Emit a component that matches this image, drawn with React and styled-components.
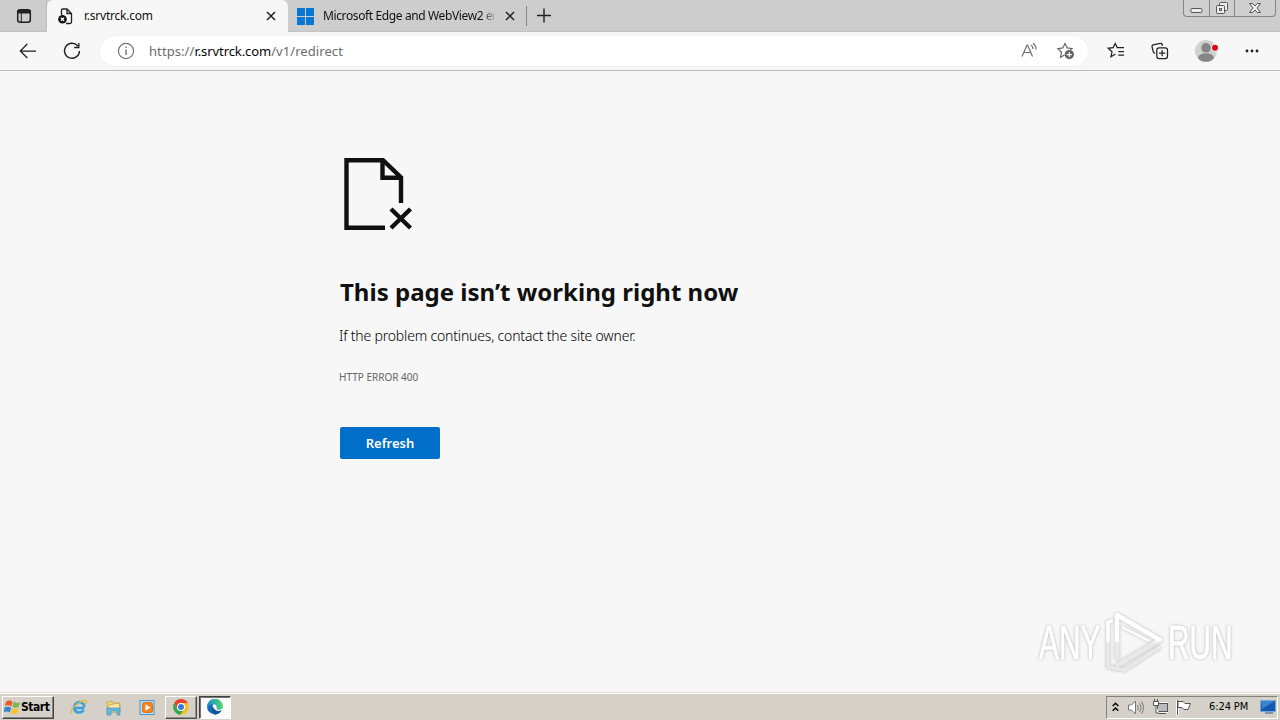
import React from "react";
import styled, { createGlobalStyle } from "styled-components";

const Global = createGlobalStyle`
  * { box-sizing: border-box; }
  html, body { margin: 0; padding: 0; overflow: hidden; }
  body { font-family: "Noto Sans", "Open Sans", sans-serif; }
  svg { display: block; flex: none; }
`;

const Screen = styled.div`
  position: relative;
  width: 1280px;
  height: 720px;
  display: flex;
  flex-direction: column;
  background: #f7f7f7;
  overflow: hidden;
`;

const TabStrip = styled.header`
  height: 32px;
  flex: none;
  display: flex;
  background: #cdcdcd;
  border-bottom: 1px solid #c2c2c2;
`;

const TabActions = styled.div`
  width: 47px;
  padding: 8px 0 0 16px;
  border-radius: 0 0 5px 0;
  border-right: 1px solid #bdbdbd;
`;

const Tab = styled.div`
  display: flex;
  align-items: center;
  width: ${(p) => (p.$active ? 241 : 238)}px;
  height: 32px;
  padding: 0 ${(p) => (p.$active ? "12px 0 10px" : "11px 0 9px")};
  background: ${(p) => (p.$active ? "#f7f7f7" : "transparent")};
  border-radius: 6px 6px 0 0;
  flex: none;
`;

const TabTitle = styled.span`
  flex: 1;
  min-width: 0;
  margin: 0 11px 0 ${(p) => (p.$fade ? 9 : 10)}px;
  font-size: 12px;
  line-height: 20px;
  letter-spacing: ${(p) => p.$spacing}px;
  white-space: nowrap;
  color: #111;
  ${(p) => p.$fade && "mask-image: linear-gradient(90deg, #000 158px, transparent 175px);"}
`;

const TabDivider = styled.div`
  width: 1px;
  height: 20px;
  margin: 6px 10px 0 0;
  background: #888;
`;

const WindowControls = styled.div`
  display: flex;
  height: 17px;
  margin: 0 4px 0 auto;
  border: 1px solid #858585;
  border-top: 0;
  border-radius: 0 0 4px 4px;
  background: #cfcfcf;
`;

const WindowButton = styled.div`
  width: ${(p) => p.$w}px;
  display: flex;
  justify-content: center;
  padding-top: 1px;
  & + & { border-left: 1px solid #858585; }
`;

const Toolbar = styled.nav`
  height: 39px;
  flex: none;
  display: flex;
  align-items: center;
  background: #f7f7f7;
  border-bottom: 1px solid #bcbcbc;
  padding: 0 18px;
`;

const NavButtons = styled.div`
  display: flex;
  gap: 24px;
  width: 82px;
`;

const AddressBar = styled.div`
  width: 988px;
  height: 30px;
  display: flex;
  align-items: center;
  padding: 0 12px 0 16px;
  border-radius: 15px;
  background: #fff;
  box-shadow: 0 0 2px #e8e8e8;
`;

const Url = styled.span`
  flex: 1;
  margin-left: 13px;
  font-size: 13px;
  line-height: 20px;
  letter-spacing: 0.08px;
  color: #6c6c6c;
  b { font-weight: 400; color: #050505; letter-spacing: -0.08px; }
`;

const AddressActions = styled.div`
  display: flex;
  gap: 16px;
`;

const ToolbarActions = styled.div`
  display: flex;
  align-items: center;
  gap: 24px;
  margin-left: 18px;
`;

const Page = styled.main`
  flex: 1;
  padding: 86px 0 0 340px;
  color: #101010;
`;

const Heading = styled.h1`
  margin: 44px 0 0;
  font-size: 24px;
  line-height: 34px;
  font-weight: 700;
  letter-spacing: 0.01px;
`;

const Message = styled.p`
  margin: 17px 0 0 -1px;
  font-size: 14px;
  line-height: 20px;
  font-weight: 300;
  letter-spacing: -0.18px;
  color: #000;
`;

const ErrorCode = styled.p`
  margin: 23px 0 0 -1px;
  font-size: 10px;
  line-height: 16px;
  color: #666;
`;

const RefreshButton = styled.button`
  display: block;
  width: 100px;
  height: 32px;
  margin-top: 42px;
  padding: 0;
  border: 0;
  border-radius: 2px;
  background: #006fc9;
  color: #fff;
  font: 600 13px/32px "Noto Sans", sans-serif;
`;

const Watermark = styled.div`
  position: absolute;
  left: 1030px;
  top: 604px;
`;

const Taskbar = styled.footer`
  height: 28px;
  flex: none;
  display: flex;
  align-items: center;
  padding: 1px 2px 0 1px;
  background: #d5d1c9;
  border-top: 1px solid #dedbd5;
  box-shadow: inset 0 1px #fff;
`;

const StartButton = styled.div`
  display: flex;
  align-items: center;
  width: 52px;
  height: 23px;
  padding-left: 1px;
  gap: 0;
  margin: 0 9px 0 1px;
  border: 1px solid;
  border-color: #fff #404040 #404040 #fff;
  box-shadow: inset -1px -1px #88857e;
  font: 700 12px/20px "DejaVu Sans Condensed", sans-serif;
  letter-spacing: -0.45px;
  color: #000;
`;

const TaskSlot = styled.div`
  display: flex;
  align-items: center;
  justify-content: center;
  width: 32px;
  height: 23px;
  margin-right: 2px;
  border: 1px solid transparent;
  ${(p) => p.$state === "open" && "border-color: #fff #505050 #505050 #fff; box-shadow: inset -1px -1px #918e87;"}
  ${(p) => p.$state === "current" && "border-color: #404040 #fff #fff #404040; box-shadow: inset 1px 1px #77746e; background: #fbfbfa;"}
`;

const Tray = styled.div`
  display: flex;
  align-items: center;
  width: 172px;
  height: 23px;
  margin-left: auto;
  padding-left: 5px;
  border: 1px solid;
  border-color: #85827b #fff #fff #85827b;
`;

const TrayIcons = styled.div`
  display: flex;
  align-items: center;
  gap: 8px;
`;

const Clock = styled.time`
  width: 51px;
  margin-left: 16px;
  font: 11px/18px "DejaVu Sans Condensed", sans-serif;
  letter-spacing: -0.1px;
  white-space: nowrap;
  color: #000;
`;

const Svg = ({ w = 16, h = w, box, sw = 1.2, color = "#202020", children }) => (
  <svg width={w} height={h} viewBox={box || `0 0 ${w} ${h}`} fill="none" stroke={color} strokeWidth={sw}>
    {children}
  </svg>
);

const Close = () => (
  <Svg w={10} sw={1.5}><path d="M1 1l8 8M9 1L1 9" /></Svg>
);

export default function App() {
  return (
    <>
      <Global />
      <Screen>
        <TabStrip>
          <TabActions>
            <Svg sw={1.5}>
              <rect x="1.7" y="1.7" width="12.6" height="12.6" rx="2.5" />
              <path d="M2 2.8h12v2H2z" fill="#202020" />
              <path d="M5.3 5v9" strokeWidth="1" />
            </Svg>
          </TabActions>
          <Tab $active>
            <Svg w={17} h={17} sw={1.3}>
              <path d="M4.5 7V2.2Q4.5 1 5.7 1H10l4.5 4.5V14q0 1.5-1.5 1.5H9M10 1v4.5h4.5" />
              <circle cx="5.5" cy="11.2" r="4.3" fill="#111" stroke="none" />
              <path d="M3.9 9.6l3.2 3.2M7.1 9.6l-3.2 3.2" stroke="#fff" />
            </Svg>
            <TabTitle $spacing={-0.23}>r.srvtrck.com</TabTitle>
            <Close />
          </Tab>
          <Tab>
            <Svg w={17}>
              <path d="M0 0h8v8H0zM9 0h8v8H9zM0 9h8v8H0zM9 9h8v8H9z" fill="#0877d3" stroke="none" />
            </Svg>
            <TabTitle $fade $spacing={-0.38}>Microsoft Edge and WebView2 en</TabTitle>
            <Close />
          </Tab>
          <TabDivider />
          <Svg w={14} h={31} sw={1.4}><path d="M0 15.5h14M7 8.5v14" /></Svg>
          <WindowControls>
            <WindowButton $w={25}>
              <Svg w={13} h={14} color="#555" sw={1}><rect x=".9" y="7.5" width="11" height="4" rx="1" fill="#eee" /></Svg>
            </WindowButton>
            <WindowButton $w={25}>
              <Svg w={14} color="#555" sw={1}>
                <rect x="4.5" y="1.5" width="8" height="8" rx="1" fill="#eee" />
                <rect x="1.5" y="4.5" width="8" height="8" rx="1" fill="#eee" />
                <rect x="4.5" y="7.5" width="2" height="2" />
              </Svg>
            </WindowButton>
            <WindowButton $w={41}>
              <Svg w={14} color="#555" sw={1}>
                <path d="M1.5 2.5h3.3L7 5l2.2-2.5h3.3L9 7l3.5 4.5H9.2L7 9l-2.2 2.5H1.5L5 7z" fill="#eee" />
              </Svg>
            </WindowButton>
          </WindowControls>
        </TabStrip>

        <Toolbar>
          <NavButtons>
            <Svg w={20} sw={1.25}><path d="M18 10H2.8M9.3 3L2.3 10l7 7" /></Svg>
            <Svg w={20} sw={1.35}><path d="M15.8 5A7.5 7.5 0 1 0 17.5 10M16.8 2v4.5h-4.6" /></Svg>
          </NavButtons>
          <AddressBar>
            <Svg w={20} color="#707070" sw={1.2}>
              <circle cx="10" cy="10" r="7.6" /><path d="M10 8.5V14M10 5.5v1.5" strokeWidth="1.4" />
            </Svg>
            <Url>https://<b>r.srvtrck.com</b>/v1/redirect</Url>
            <AddressActions>
              <Svg w={20} color="#6d6d6d" sw={1.2}>
                <path d="M2 15.5L7 4h.5l5 11.5M4 11.5h6.7M11 4q2 1.5 2 4M13 2.2q3.2 2.3 3 6.3" />
              </Svg>
              <Svg w={20} color="#666" sw={1.2}>
                <path d="M8.5 14L4.5 16.3l1-5L2 7.6l4.8-.7L9 2.5l2.3 4.4 4.7.7-2.2 2" />
                <circle cx="13.3" cy="13.6" r="4.6" fill="#626262" stroke="none" />
                <path d="M13.3 11v5.2M10.7 13.6h5.2" stroke="#fff" />
              </Svg>
            </AddressActions>
          </AddressBar>
          <ToolbarActions>
            <Svg w={20} sw={1.25}>
              <path d="M9.5 13L5 15.8l1-5L2.2 7.3l4.9-.7L9.2 2.5l2.1 4.1H18M12.3 10.5H18M12.3 14.2H18" />
            </Svg>
            <Svg w={20} sw={1.25}>
              <path d="M5 12.4L3.3 11 2 5.6q-.2-1.4 1-1.8l7.3-1.5q1.3-.2 1.8 1l.4 1.5" />
              <rect x="6.8" y="6.8" width="10.7" height="10.7" rx="2.3" /><path d="M12.1 9v6.2M9 12.1h6.2" />
            </Svg>
            <Svg w={24}>
              <circle cx="12" cy="12" r="11" fill="#d1d1d1" stroke="none" />
              <circle cx="12" cy="8.8" r="4.8" fill="#858585" stroke="none" />
              <ellipse cx="12" cy="18.5" rx="7.8" ry="4.2" fill="#858585" stroke="none" />
              <circle cx="21" cy="8.8" r="3.6" fill="#f7f7f7" stroke="none" />
              <circle cx="21" cy="8.8" r="3" fill="#dc0619" stroke="none" />
            </Svg>
            <Svg w={20}>
              <g fill="#202020" stroke="none"><circle cx="5" cy="10" r="1.4" /><circle cx="10" cy="10" r="1.4" /><circle cx="15" cy="10" r="1.4" /></g>
            </Svg>
          </ToolbarActions>
        </Toolbar>

        <Page>
          <Svg w={74} h={74} sw={4.4} color="#101010">
            <path d="M45 70.7H6.5V3.2H43L61 20.5V46" />
            <path d="M42.5 3.2v17.6H61" />
            <path d="M51 52L70.5 71M70.5 52L51 71" />
          </Svg>
          <Heading>This page isn’t working right now</Heading>
          <Message>If the problem continues, contact the site owner.</Message>
          <ErrorCode>HTTP ERROR 400</ErrorCode>
          <RefreshButton>Refresh</RefreshButton>
        </Page>

        <Watermark>
          <svg width="212" height="74">
            <defs>
              <linearGradient id="markFill" x1="0" y1="0" x2="0" y2="74" gradientUnits="userSpaceOnUse">
                <stop offset=".49" stopColor="#fff" /><stop offset=".53" stopColor="#e9e9e9" />
              </linearGradient>
              <filter id="markShadow" x="-10%" y="-20%" width="120%" height="140%">
                <feDropShadow dx="0" dy="0" stdDeviation="1.6" floodColor="#888" floodOpacity=".65" />
              </filter>
            </defs>
            <g filter="url(#markShadow)" fill="none" stroke="url(#markFill)">
              <g fontFamily="Liberation Sans Narrow, Liberation Sans, sans-serif" fontSize="49" fill="url(#markFill)" strokeWidth=".6">
                <text transform="translate(9 55) scale(.64 1)" textLength="96" lengthAdjust="spacingAndGlyphs">ANY</text>
                <text transform="translate(138 55) scale(.64 1)" textLength="101" lengthAdjust="spacingAndGlyphs">RUN</text>
              </g>
              <path d="M87 55V11L130 36 86 62" strokeWidth="4.5" strokeLinejoin="round" />
              <path d="M83 17L78 18V63L94 66 130 43" strokeWidth="3.5" strokeLinejoin="round" />
              <path d="M92 23L119 37" strokeWidth="2" />
            </g>
          </svg>
        </Watermark>

        <Taskbar>
          <StartButton>
            <Svg w={17} box="0 1 16 15">
              <g stroke="none">
                <path d="M2 3q3-2 6 0L7 7.5Q4 5.5.8 7z" fill="#eb5b27" />
                <path d="M9 3.2q3 2 6 .3L13.9 8Q11 9.5 8 7.7z" fill="#79b84b" />
                <path d="M.5 8.5q3-1.5 6.2 0L5.6 13Q3 11.5 0 13z" fill="#3185cd" />
                <path d="M7.6 9q3 1.7 6 .3L12.5 14q-3 1.5-6-.3z" fill="#f8c22d" />
              </g>
            </Svg>
            Start
          </StartButton>
          <TaskSlot>
            <Svg w={18}>
              <path d="M14.5 10H4.2a4.8 4.8 0 1 1 10.2-1.3M4 10q1 4.5 5 4.5 3 0 4.7-2.5" stroke="#36a3e0" strokeWidth="2.7" />
              <path d="M2 15.5Q-1 11.5 8 5.5 16 .8 16.5 3q.4 1-1 3" stroke="#e2ba46" strokeWidth="1.4" />
            </Svg>
          </TaskSlot>
          <TaskSlot>
            <Svg w={17} sw={.6} color="#b49343">
              <path d="M2 3l5-1 1 2h7v9H2z" fill="#efd378" /><path d="M4 6l10-2 1 9H3z" fill="#f9e9a5" />
              <path d="M2 9h13v7h-3v-4H6v4H2z" fill="#67b6dc" stroke="#448fb6" />
            </Svg>
          </TaskSlot>
          <TaskSlot>
            <Svg w={17} sw={1} color="#4b96c9">
              <rect x="1" y="1.5" width="14" height="14" fill="#b7def2" />
              <rect x="3.5" y="3.5" width="10" height="10" rx="2" fill="#f38420" stroke="#de7017" />
              <path d="M6.5 5.3l5 3.2-5 3.2z" fill="#fff" stroke="none" />
            </Svg>
          </TaskSlot>
          <TaskSlot $state="open">
            <Svg w={16}>
              <g stroke="none">
                <circle cx="8" cy="8" r="7.8" fill="#f9c21b" />
                <path d="M1.2 4.1A7.8 7.8 0 0 1 14.8 4.1H8a4 4 0 0 0-3.5 5.8z" fill="#e84235" />
                <path d="M1.2 4.1A7.8 7.8 0 0 0 7.2 15.8L11.5 10A4 4 0 0 1 4.5 9.9z" fill="#32a852" />
                <circle cx="8" cy="8" r="4" fill="#fff" /><circle cx="8" cy="8" r="3" fill="#3778e5" />
              </g>
            </Svg>
          </TaskSlot>
          <TaskSlot $state="current">
            <Svg w={16}>
              <defs><linearGradient id="edgeTop" x2="1"><stop stopColor="#168cdb" /><stop offset="1" stopColor="#55d56b" /></linearGradient></defs>
              <g stroke="none">
                <path d="M0 8A8 8 0 1 1 16 7.5Q15.5 11 11.5 10.8 9 10.6 9.7 9 10 6 6.5 5 2.5 4.4 0 8z" fill="url(#edgeTop)" />
                <path d="M0 8Q2 4.3 6.7 5 4.3 7 6 10.3 9 14 14.6 11.6A8 8 0 0 1 0 8z" fill="#126cbd" />
                <path d="M5.5 7q-3 4 2 8.7 4.6-.4 7.1-4.1Q8 13.5 5.5 7z" fill="#12539f" />
              </g>
            </Svg>
          </TaskSlot>
          <Tray>
            <TrayIcons>
              <Svg w={7} h={10} color="#000" sw={1.5}><path d="M.7 4l2.8-2.7L6.3 4M.7 8.7L3.5 6l2.8 2.7" /></Svg>
              <Svg w={17} color="#777" sw={1}>
                <path d="M1.5 6h3l4-4v13l-4-4h-3z" fill="#fff" /><path d="M10.5 6q1.5 2.5 0 5M12.7 4.2q2.8 4.3 0 8.6M14.7 2.5q3.5 6 0 12" />
              </Svg>
              <Svg w={16} color="#555" sw={1}>
                <rect x="5.5" y="4.5" width="10" height="8" fill="#ddd" stroke="#fff" strokeWidth="2.5" /><rect x="5.5" y="4.5" width="10" height="8" fill="#bbb" />
                <path d="M1.5 2.5h5v4h-5zM2.5 0v3M5.5 0v3M4 6v8h3M7 14.5h7" fill="#fff" />
              </Svg>
              <Svg w={17} color="#555" sw={1}>
                <path d="M1.5 1.5v15" stroke="#fff" strokeWidth="3" /><path d="M1.5 1v15M2 2.5h5l2 2h5.5l-2.5 6H8l-2-2H2z" fill="#fff" />
              </Svg>
            </TrayIcons>
            <Clock>6:24 PM</Clock>
            <Svg w={17} h={14} sw={1} color="#77a5d5">
              <rect x=".5" y=".5" width="15" height="11" fill="#1458b1" /><path d="M1 1h14L2 9z" fill="#3b83cd" stroke="none" /><path d="M5 13h8" stroke="#315784" />
            </Svg>
          </Tray>
        </Taskbar>
      </Screen>
    </>
  );
}
